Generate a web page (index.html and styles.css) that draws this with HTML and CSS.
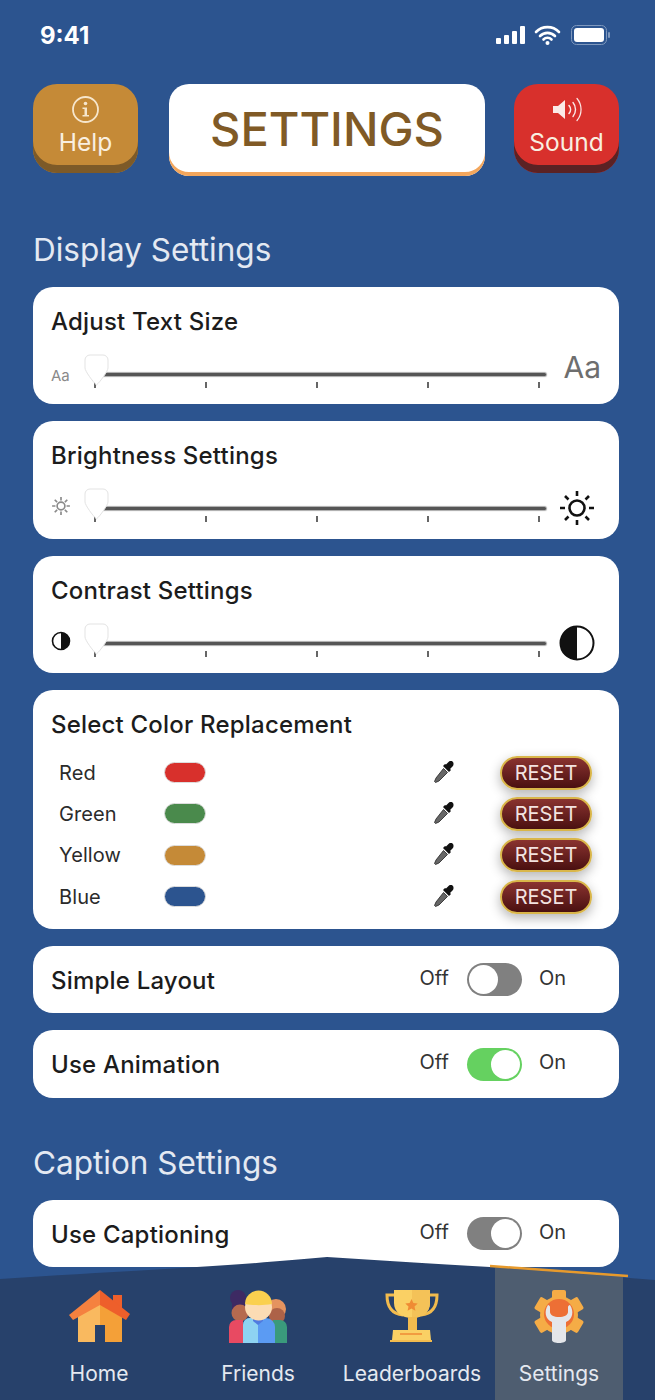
FILE: index.html
```html
<!DOCTYPE html>
<html lang="en">
<head>
    <meta charset="UTF-8">
    <meta name="viewport" content="width=device-width, initial-scale=1.0">
    <title>Settings</title>
    <link rel="stylesheet" href="styles.css">
</head>
<body>
<div class="screen">

    <div class="status-bar">
        <span class="time">9:41</span>
        <div class="status-icons">
            <svg width="29" height="18" viewBox="0 0 29 18"><g fill="#fff"><rect x="0" y="12" width="5" height="6" rx="1"/><rect x="8" y="9" width="5" height="9" rx="1"/><rect x="16" y="5" width="5" height="13" rx="1"/><rect x="24" y="0" width="5" height="18" rx="1"/></g></svg>
            <svg class="wifi" width="27" height="20" viewBox="0 0 27 20"><path d="M2 7a16 16 0 0 1 23 0M6 11a10.500 10.500 0 0 1 15 0M9.500 14.500a5.500 5.500 0 0 1 8 0" fill="none" stroke="#fff" stroke-width="2.600" stroke-linecap="round"/><circle cx="13.500" cy="18" r="2" fill="#fff"/></svg>
            <svg class="battery" width="40" height="20" viewBox="0 0 40 20"><rect x="0.500" y="0.500" width="35" height="19" rx="5" fill="none" stroke="#7f98bd"/><rect x="3" y="3" width="30" height="14" rx="3" fill="#fff"/><rect x="37" y="7" width="2" height="6" rx="1" fill="#7f98bd"/></svg>
        </div>
    </div>

    <header class="top-row">
        <button class="top-btn help-btn">
            <svg width="29" height="29" viewBox="0 0 29 29"><circle cx="14.500" cy="14.500" r="12.500" fill="none" stroke="#f6e6cc" stroke-width="1.800"/><circle cx="14.500" cy="8.500" r="1.800" fill="#f6e6cc"/><path d="M11.500 12.500h4.500v7.500h2v1.500h-6.500v-1.500h2v-6h-2z" fill="#f6e6cc"/></svg>
            <span>Help</span>
        </button>
        <h1 class="page-title">SETTINGS</h1>
        <button class="top-btn sound-btn">
            <svg width="32" height="29" viewBox="0 0 32 29"><path d="M2 11h5l7-6v19l-7-6H2z" fill="#fbe9e7"/><g fill="none" stroke="#fbe9e7" stroke-linecap="round"><path d="M18 10.500a6 6 0 0 1 0 8" stroke-width="1.600"/><path d="M22 7.500a11 11 0 0 1 0 14" stroke-width="1.400"/><path d="M26 3.500a17 17 0 0 1 0 22" stroke-width="1.200"/></g></svg>
            <span>Sound</span>
        </button>
    </header>

    <h2 class="section-title first">Display Settings</h2>

    <section class="card slider-card">
        <h3>Adjust Text Size</h3>
        <div class="slider-row">
            <span class="min-label">Aa</span>
            <div class="slider">
                <div class="track"></div>
                <div class="ticks"><i></i><i></i><i></i><i></i><i></i></div>
                <svg class="thumb" width="25" height="32" viewBox="0 0 25 32"><path d="M6 1h13a5 5 0 0 1 5 5v8c0 3-8 14-11.500 17C9 28 1 17 1 14V6a5 5 0 0 1 5-5z" fill="#fff" stroke="#e3e3e3"/></svg>
            </div>
            <span class="max-label">Aa</span>
        </div>
    </section>

    <section class="card slider-card">
        <h3>Brightness Settings</h3>
        <div class="slider-row">
            <svg class="min-icon" width="20" height="20" viewBox="0 0 36 36"><g fill="none" stroke="#8a8a8a" stroke-width="3"><circle cx="18" cy="18" r="7"/><path d="M18 2v6M18 28v6M2 18h6M28 18h6M6.700 6.700l4.300 4.300M25 25l4.300 4.300M6.700 29.300l4.300-4.300M25 11l4.300-4.300"/></g></svg>
            <div class="slider">
                <div class="track"></div>
                <div class="ticks"><i></i><i></i><i></i><i></i><i></i></div>
                <svg class="thumb" width="25" height="32" viewBox="0 0 25 32"><path d="M6 1h13a5 5 0 0 1 5 5v8c0 3-8 14-11.500 17C9 28 1 17 1 14V6a5 5 0 0 1 5-5z" fill="#fff" stroke="#e3e3e3"/></svg>
            </div>
            <svg class="max-icon" width="36" height="36" viewBox="0 0 36 36"><g fill="none" stroke="#111" stroke-width="2.600"><circle cx="18" cy="18" r="7.500"/><path d="M18 1v5M18 30v5M1 18h5M30 18h5M6 6l3.500 3.500M26.500 26.500L30 30M6 30l3.500-3.500M26.500 9.500L30 6"/></g></svg>
        </div>
    </section>

    <section class="card slider-card">
        <h3>Contrast Settings</h3>
        <div class="slider-row">
            <svg class="min-icon" width="20" height="20" viewBox="0 0 20 20"><circle cx="10" cy="10" r="8.500" fill="#fff" stroke="#111" stroke-width="1.600"/><path d="M10 1.500a8.500 8.500 0 0 1 0 17z" fill="#111"/></svg>
            <div class="slider">
                <div class="track"></div>
                <div class="ticks"><i></i><i></i><i></i><i></i><i></i></div>
                <svg class="thumb" width="25" height="32" viewBox="0 0 25 32"><path d="M6 1h13a5 5 0 0 1 5 5v8c0 3-8 14-11.500 17C9 28 1 17 1 14V6a5 5 0 0 1 5-5z" fill="#fff" stroke="#e3e3e3"/></svg>
            </div>
            <svg class="max-icon" width="36" height="36" viewBox="0 0 36 36"><circle cx="18" cy="18" r="16.500" fill="#fff" stroke="#111" stroke-width="2"/><path d="M18 1.500a16.500 16.500 0 0 0 0 33z" fill="#111"/></svg>
        </div>
    </section>

    <section class="card color-card">
        <h3>Select Color Replacement</h3>
        <div class="color-list">
            <div class="color-row">
                <span>Red</span><i class="swatch red"></i>
                <svg class="dropper" width="24" height="24" viewBox="0 0 24 24"><path d="M14 3.500l2.500-2.500a2.800 2.800 0 0 1 5 2 3 3 0 0 1-1 2.500L18 8l1 1-2 2-6-6 2-2z" fill="#111"/><path d="M11.500 7.500l4 4L7 20l-3.500 1.500-1-1L4 17z" fill="#666" stroke="#222" stroke-width="0.800"/></svg>
                <button class="reset-btn">RESET</button>
            </div>
            <div class="color-row">
                <span>Green</span><i class="swatch green"></i>
                <svg class="dropper" width="24" height="24" viewBox="0 0 24 24"><path d="M14 3.500l2.500-2.500a2.800 2.800 0 0 1 5 2 3 3 0 0 1-1 2.500L18 8l1 1-2 2-6-6 2-2z" fill="#111"/><path d="M11.500 7.500l4 4L7 20l-3.500 1.500-1-1L4 17z" fill="#666" stroke="#222" stroke-width="0.800"/></svg>
                <button class="reset-btn">RESET</button>
            </div>
            <div class="color-row">
                <span>Yellow</span><i class="swatch yellow"></i>
                <svg class="dropper" width="24" height="24" viewBox="0 0 24 24"><path d="M14 3.500l2.500-2.500a2.800 2.800 0 0 1 5 2 3 3 0 0 1-1 2.500L18 8l1 1-2 2-6-6 2-2z" fill="#111"/><path d="M11.500 7.500l4 4L7 20l-3.500 1.500-1-1L4 17z" fill="#666" stroke="#222" stroke-width="0.800"/></svg>
                <button class="reset-btn">RESET</button>
            </div>
            <div class="color-row">
                <span>Blue</span><i class="swatch blue"></i>
                <svg class="dropper" width="24" height="24" viewBox="0 0 24 24"><path d="M14 3.500l2.500-2.500a2.800 2.800 0 0 1 5 2 3 3 0 0 1-1 2.500L18 8l1 1-2 2-6-6 2-2z" fill="#111"/><path d="M11.500 7.500l4 4L7 20l-3.500 1.500-1-1L4 17z" fill="#666" stroke="#222" stroke-width="0.800"/></svg>
                <button class="reset-btn">RESET</button>
            </div>
        </div>
    </section>

    <section class="card toggle-card">
        <h3>Simple Layout</h3>
        <div class="toggle-group">
            <span>Off</span>
            <div class="toggle off"><i></i></div>
            <span>On</span>
        </div>
    </section>

    <section class="card toggle-card">
        <h3>Use Animation</h3>
        <div class="toggle-group">
            <span>Off</span>
            <div class="toggle green-on"><i></i></div>
            <span>On</span>
        </div>
    </section>

    <h2 class="section-title second">Caption Settings</h2>

    <section class="card toggle-card">
        <h3>Use Captioning</h3>
        <div class="toggle-group">
            <span>Off</span>
            <div class="toggle gray-on"><i></i></div>
            <span>On</span>
        </div>
    </section>

    <nav class="tab-bar">
        <svg class="tab-shape" width="655" height="143" viewBox="0 0 655 143">
            <path d="M0 22C70 17 140 14 197 10C250 7 290 3 327 0C380 3 430 7 490 10L655 23V143H0z" fill="#27416b"/>
            <path d="M495 10.500L623 20V143H495z" fill="#4e5d70"/>
            <path d="M490 9L628 19" stroke="#e79a2c" stroke-width="2.500" fill="none"/>
        </svg>
        <a class="tab">
            <svg width="62" height="56" viewBox="0 0 62 56">
                <path d="M45 6h9v16h-9z" fill="#ee5f2b"/>
                <path d="M10 24L32 6v47H10z" fill="#f9b95f"/>
                <path d="M32 6l22 18v29H32z" fill="#f4a038"/>
                <path d="M27 36h10v17H27z" fill="#27416b"/>
                <path d="M32 1L1 26l4 5L32 16z" fill="#f5813f"/>
                <path d="M32 1l30 24-4 6L32 16z" fill="#ee5f2b"/>
            </svg>
            <span>Home</span>
        </a>
        <a class="tab">
            <svg width="59" height="56" viewBox="0 0 59 56">
                <circle cx="9" cy="9" r="8" fill="#3d2a63"/>
                <path d="M3 9h13v16H3z" fill="#3d2a63"/>
                <circle cx="47" cy="20" r="10" fill="#e5935f"/>
                <circle cx="11" cy="24" r="8.500" fill="#b56a4f"/>
                <circle cx="48" cy="27" r="8" fill="#ad6248"/>
                <path d="M0 54V38a7 7 0 0 1 7-7h7v23z" fill="#e84a62"/>
                <path d="M58 54V38a7 7 0 0 0-7-7h-7v23z" fill="#3a9a7c"/>
                <path d="M14 54V36a7 7 0 0 1 7-7h16a9 9 0 0 1 9 9v16z" fill="#5b9bf3"/>
                <path d="M14 54V36a7 7 0 0 1 7-7h8v25z" fill="#8ed3f2"/>
                <path d="M24 27h10v5l-5 4-5-4z" fill="#4f7be0"/>
                <circle cx="29.500" cy="18" r="13.500" fill="#fcdcb4"/>
                <path d="M16 15a13.500 13.500 0 0 1 27 0c-8 1.500-19 1.500-27 0z" fill="#fad04f"/>
            </svg>
            <span>Friends</span>
        </a>
        <a class="tab tab-wide">
            <svg width="54" height="56" viewBox="0 0 54 56">
                <path d="M11 6H2c0 12 5 19 16 20M42 6h10c0 12-5 19-16 20" fill="none" stroke="#f2bb4e" stroke-width="3"/>
                <path d="M9 1h36v13c0 9-8 15-18 15S9 23 9 14z" fill="#fad064"/>
                <path d="M27 1h18v13c0 9-8 15-18 15z" fill="#f4c258"/>
                <path d="M26.500 10l1.900 4 4.300.500-3.200 3 .9 4.300-3.900-2.200-3.900 2.200.9-4.300-3.200-3 4.300-.500z" fill="#ef8b34"/>
                <path d="M23 28h9v13h-9z" fill="#f2bb4e"/>
                <path d="M8 41h37l1 10H7z" fill="#fad064"/>
                <path d="M5 51h42v2H5z" fill="#f2bb4e"/>
                <path d="M15 45h22" stroke="#ef8b34" stroke-width="1.500"/>
            </svg>
            <span>Leaderboards</span>
        </a>
        <a class="tab">
            <svg width="50" height="56" viewBox="0 0 50 56">
                <g fill="#f5ac46">
                    <circle cx="25" cy="26" r="19"/>
                    <rect x="18" y="1" width="14" height="10" rx="2"/>
                    <rect x="18" y="1" width="14" height="10" rx="2" transform="rotate(60 25 26)"/>
                    <rect x="18" y="1" width="14" height="10" rx="2" transform="rotate(120 25 26)"/>
                    <rect x="18" y="1" width="14" height="10" rx="2" transform="rotate(180 25 26)"/>
                    <rect x="18" y="1" width="14" height="10" rx="2" transform="rotate(240 25 26)"/>
                    <rect x="18" y="1" width="14" height="10" rx="2" transform="rotate(300 25 26)"/>
                </g>
                <circle cx="25" cy="25" r="15" fill="#ed6f35"/>
                <path d="M14 16c-4 6-3 14 4 17v18c0 2 3 3 7 3s7-1 7-3V33c7-3 8-11 4-17-1 0-2 1-2 2v5c0 3-4 5-9 5s-9-2-9-5v-5c0-1-1-2-2-2z" fill="#e4e6ea"/>
            </svg>
            <span>Settings</span>
        </a>
    </nav>

</div>
</body>
</html>
```

FILE: styles.css
```css
* {
    box-sizing: border-box;
}
body {
    margin: 0;
    background-color: #2c548f;
    font-family: Inter, "Liberation Sans", sans-serif;
}
button {
    font-family: inherit;
    border: none;
    padding: 0;
}
h1, h2, h3 {
    margin: 0;
    font-weight: 500;
}
.screen {
    position: relative;
    width: 655px;
    height: 1400px;
    padding: 0 36px 0 33px;
    overflow: hidden;
    background-color: #2c548f;
}

/* status bar */
.status-bar {
    display: flex;
    justify-content: space-between;
    align-items: center;
    height: 84px;
    padding: 0 8px 14px 7px;
    color: #fff;
}
.time {
    font-size: 24px;
    font-weight: 700;
}
.status-icons {
    display: flex;
    align-items: center;
}
.wifi {
    margin-left: 9px;
}
.battery {
    margin-left: 10px;
}

/* header */
.top-row {
    display: flex;
    align-items: flex-start;
    gap: 30px;
}
.top-btn {
    display: flex;
    flex-direction: column;
    align-items: center;
    flex: none;
    width: 105px;
    height: 89px;
    padding-top: 11px;
    border-radius: 24px;
    color: #f9efe0;
    font-size: 24.500px;
}
.top-btn span {
    margin-top: 3px;
}
.help-btn {
    background-color: #c58a37;
    box-shadow: inset 0 -8px 0 #7d5a28;
}
.sound-btn {
    background-color: #d8302c;
    box-shadow: inset 0 -8px 0 #5b2224;
}
.page-title {
    flex: none;
    width: 316px;
    height: 92px;
    margin: 0 -1px 0 1px;
    border-radius: 20px;
    background-color: #fff;
    box-shadow: inset 0 -4px 0 #f3a65c;
    color: #805a26;
    font-size: 47px;
    font-weight: 500;
    line-height: 90px;
    text-align: center;
}

.section-title {
    color: #e4e9f2;
    font-size: 31.500px;
    font-weight: 400;
    line-height: 36px;
}
.section-title.first {
    margin: 56px 0 19px;
}
.section-title.second {
    margin: 47px 0 19px;
}

/* cards */
.card {
    width: 586px;
    margin-bottom: 17px;
    border-radius: 20px;
    background-color: #fff;
    color: #1c1c1c;
}
.card h3 {
    font-size: 24px;
    letter-spacing: 0.2px;
    line-height: 28px;
}
.slider-card {
    height: 117.330px;
    padding: 21px 18px 0;
}
.slider-row {
    display: flex;
    align-items: flex-end;
    height: 50px;
    margin-top: 3px;
}
.min-label {
    width: 33px;
    padding-bottom: 4px;
    color: #8a8a8a;
    font-size: 15px;
}
.min-icon {
    flex: none;
    width: 20px;
    margin: 0 13px 7px 0;
}
.max-label {
    width: 53px;
    padding-bottom: 4px;
    color: #6e6e6e;
    font-size: 30px;
    text-align: right;
}
.max-icon {
    flex: none;
    margin: 0 6px -3px 11px;
}
.slider {
    position: relative;
    flex: 1;
    height: 50px;
}
.track {
    position: absolute;
    top: 34px;
    left: 17px;
    right: 2px;
    height: 3px;
    border-radius: 2px;
    background-color: #555;
    box-shadow: 0 0 1px 1px #aaa;
}
.ticks {
    position: absolute;
    top: 43px;
    left: 10px;
    right: 8px;
    display: flex;
    justify-content: space-between;
}
.ticks i {
    width: 2px;
    height: 6px;
    background-color: #666;
}
.thumb {
    position: absolute;
    top: 15px;
    left: 0;
}

/* color replacement */
.color-card {
    height: 239px;
    padding: 21px 18px 0;
}
.color-list {
    margin-top: 13px;
}
.color-row {
    display: flex;
    align-items: center;
    height: 41.300px;
    padding-left: 8px;
    font-size: 20px;
    letter-spacing: 0.1px;
    color: #2b2b2b;
}
.color-row span {
    width: 105px;
}
.swatch {
    width: 42px;
    height: 21px;
    border-radius: 11px;
    border: 1px solid #ddd;
}
.swatch.red { background-color: #d8302c; }
.swatch.green { background-color: #4a8a4c; }
.swatch.yellow { background-color: #c58a37; }
.swatch.blue { background-color: #2c548f; }
.dropper {
    margin-left: 226px;
}
.reset-btn {
    width: 92px;
    height: 34px;
    margin-left: 44px;
    border: 2px solid #d9b64a;
    border-radius: 17px;
    background: linear-gradient(#8a3330, #4a1010);
    box-shadow: 0 4px 12px rgba(0,0,0,0.3);
    color: #f3e3e0;
    font-size: 20px;
}

/* toggles */
.toggle-card {
    display: flex;
    align-items: center;
    justify-content: space-between;
    height: 67.500px;
    padding: 0 53px 0 18px;
}
.toggle-card h3 {
    margin-top: 2px;
}
.toggle-group {
    display: flex;
    align-items: center;
    color: #333;
    font-size: 20px;
}
.toggle-group span {
    margin-top: -4px;
}
.toggle {
    position: relative;
    width: 55px;
    height: 33px;
    margin: 0 17px 0 18px;
    border-radius: 17px;
}
.toggle i {
    position: absolute;
    top: 2px;
    width: 29px;
    height: 29px;
    border-radius: 50%;
    background-color: #fff;
}
.toggle.off {
    background-color: #808080;
}
.toggle.off i {
    left: 2px;
}
.toggle.green-on {
    background-color: #65d160;
}
.toggle.green-on i {
    right: 2px;
}
.toggle.gray-on {
    background-color: #808080;
}
.toggle.gray-on i {
    right: 2px;
}

/* bottom tabs */
.tab-bar {
    position: absolute;
    left: 0;
    bottom: 0;
    width: 655px;
    height: 143px;
    display: grid;
    grid-template-columns: 198px 120px 177px 128px;
    padding-top: 32px;
    color: #e5e9f0;
    font-size: 21px;
}
.tab-shape {
    position: absolute;
    left: 0;
    top: 0;
}
.tab {
    position: relative;
    display: flex;
    flex-direction: column;
    align-items: center;
    gap: 16px;
    white-space: nowrap;
}
.tab-wide {
    margin-left: 11px;
}
```
